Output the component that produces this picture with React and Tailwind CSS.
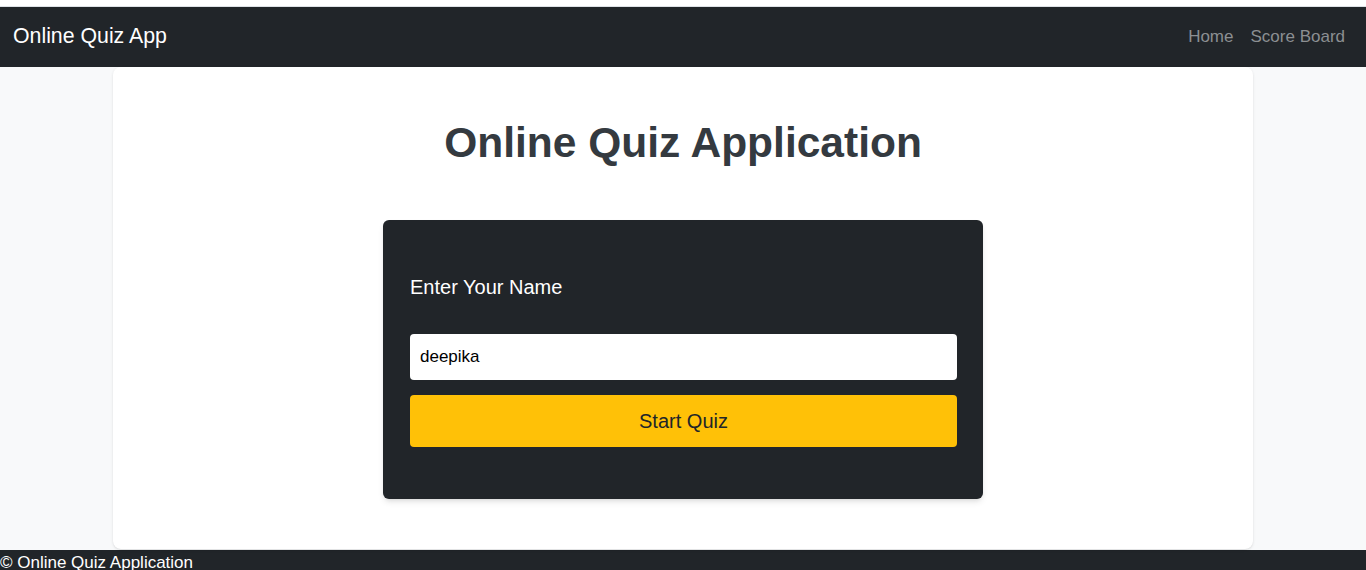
import { useState } from 'react';

function App() {
  const [name, setName] = useState('deepika');

  return (
    <div className="min-h-screen bg-white font-['Liberation_Sans',Arial,sans-serif]">
      {/* top strip */}
      <div className="h-[7px] bg-white border-b border-[#dee2e6]"></div>

      {/* Navbar */}
      <nav className="h-[60px] bg-[#212529] flex items-center justify-between pl-[13px] pr-[21px]">
        <span className="text-white text-[21.3px]">Online Quiz App</span>
        <div className="flex gap-[17px] text-[17px] text-[#8c8f92]">
          <a href="#">Home</a>
          <a href="#">Score Board</a>
        </div>
      </nav>

      {/* Main */}
      <div className="h-[483px] bg-[#f8f9fa] flex justify-center">
        <div className="w-[1140px] h-[482px] bg-white rounded-lg shadow-sm flex flex-col items-center pt-[51px]">
          <h1 className="text-[42.5px] leading-[50px] font-bold text-[#343a40]">Online Quiz Application</h1>

          <div className="mt-[52px] w-[600px] bg-[#212529] rounded-md shadow-md pl-[27px] pr-[26px] pt-[52px] pb-[52px]">
            <label className="block text-white text-[20px] leading-[30px]">Enter Your Name</label>
            <input
              type="text"
              value={name}
              onChange={(e) => setName(e.target.value)}
              className="mt-[32px] w-full h-[46px] bg-white rounded-[4px] px-[10px] text-[17px] text-black outline-none"
            />
            <button className="mt-[15px] w-full h-[52px] bg-[#ffc107] rounded-[4px] text-[20px] text-[#212529]">
              Start Quiz
            </button>
          </div>
        </div>
      </div>

      {/* Footer */}
      <footer className="h-[20px] bg-[#212529] text-white text-[17px] leading-[25px]">
        © Online Quiz Application
      </footer>
    </div>
  );
}

export default App;
